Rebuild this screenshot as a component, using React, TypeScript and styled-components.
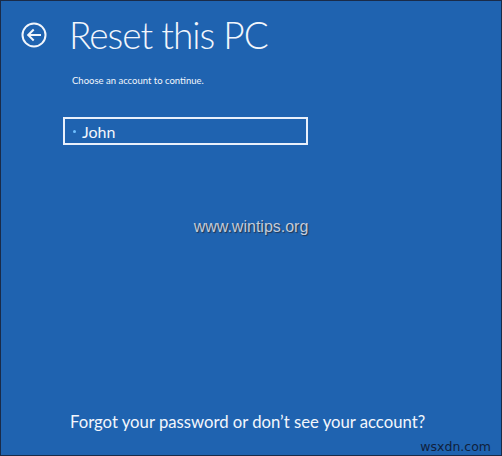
import styled, { createGlobalStyle } from "styled-components"

const Global = createGlobalStyle`
  html, body {
    margin: 0;
    padding: 0;
    background: #1f63b0;
  }
  * { box-sizing: border-box; }
`

const Screen = styled.div`
  width: 502px;
  height: 456px;
  background: #1f63b0;
  border: 1px solid #1a2b48;
  display: flex;
  flex-direction: column;
  color: #f2f6fc;
  font-family: Lato, "Open Sans", sans-serif;
  overflow: hidden;
`

const Header = styled.div`
  display: flex;
  align-items: center;
  gap: 21px;
  padding: 9px 0 0 19px;
  height: 58px;
`

const BackButton = styled.button`
  width: 28px;
  height: 28px;
  padding: 0;
  border: none;
  background: none;
  display: flex;
  align-items: center;
  justify-content: center;
  color: #f2f6fc;
`

const Title = styled.h1`
  margin: 0;
  font-weight: 300;
  font-size: 37px;
  letter-spacing: -1px;
  line-height: 1;
`

const Body = styled.div`
  padding: 16px 0 0 62px;
  display: flex;
  flex-direction: column;
`

const Prompt = styled.p`
  margin: 0 0 0 9px;
  font-size: 9.5px;
  line-height: 12px;
`

const AccountBox = styled.div`
  margin-top: 30px;
  width: 245px;
  height: 28px;
  border: 2px solid #e9f0fb;
  display: flex;
  align-items: center;
  padding-left: 8px;
  gap: 6px;
  font-size: 16px;
`

const Dot = styled.span`
  width: 3px;
  height: 3px;
  border-radius: 50%;
  background: #6fc0ff;
`

const Mark = styled.div`
  margin-top: 73px;
  align-self: center;
  font-family: "Liberation Sans", Arial, sans-serif;
  font-size: 16px;
  color: #c3cbd9;
  text-shadow: 1px 1px 1px #23354f;
`

const Footer = styled.div`
  margin-top: auto;
  padding-left: 69px;
  font-size: 16.7px;
  line-height: 22px;
`

const Stamp = styled.div`
  align-self: flex-end;
  padding: 6px 10px 1px 0;
  font-family: "DejaVu Sans", sans-serif;
  font-size: 12.5px;
  color: #10213c;
`

function BackIcon() {
  return (
    <svg width="26" height="26" viewBox="0 0 26 26" fill="none" stroke="currentColor" strokeWidth="2">
      <circle cx="13" cy="13" r="11.5" />
      <path d="M19 13H7.5M12 8.2L7.2 13l4.8 4.8" strokeLinecap="square" />
    </svg>
  )
}

export default function App() {
  return (
    <Screen>
      <Global />
      <Header>
        <BackButton>
          <BackIcon />
        </BackButton>
        <Title>Reset this PC</Title>
      </Header>
      <Body>
        <Prompt>Choose an account to continue.</Prompt>
        <AccountBox>
          <Dot />
          John
        </AccountBox>
      </Body>
      <Mark>www.wintips.org</Mark>
      <Footer>Forgot your password or don’t see your account?</Footer>
      <Stamp>wsxdn.com</Stamp>
    </Screen>
  )
}
